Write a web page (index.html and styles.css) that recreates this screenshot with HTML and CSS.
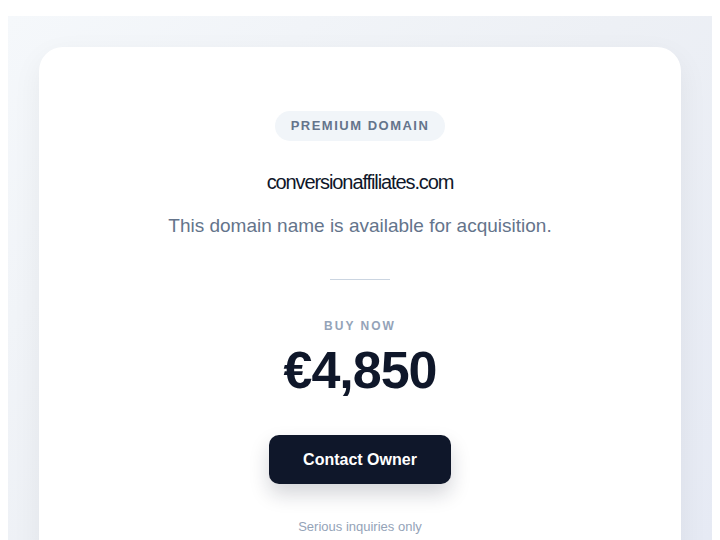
FILE: index.html
```html
<!DOCTYPE html>
<html>
<head>
    <title>conversionaffiliates.com</title>
    <link rel="stylesheet" href="styles.css">
</head>
<body>
    <div class="page">
        <div class="card">
            <span class="badge">Premium Domain</span>
            <h1 class="domain">conversionaffiliates.com</h1>
            <p class="lead">This domain name is available for acquisition.</p>
            <div class="divider"></div>
            <p class="label">Buy Now</p>
            <p class="price">€4,850</p>
            <button class="my-button">Contact Owner</button>
            <p class="note">Serious inquiries only</p>
        </div>
    </div>
</body>
</html>
```

FILE: styles.css
```css
body {
    margin: 8px 8px 0;
    background-color: #ffffff;
    font-family: "Liberation Sans", Arial, sans-serif;
}

.page {
    margin-top: 8px;
    padding: 31px 31px 0;
    background: linear-gradient(135deg, #f5f8fb 0%, #edf0f5 50%, #e6eaf4 100%);
    height: 524px;
    box-sizing: border-box;
    overflow: hidden;
}

.card {
    background-color: #ffffff;
    border-radius: 24px;
    box-shadow: 0 10px 30px rgba(15, 23, 42, 0.06);
    padding: 64px 40px 40px;
    text-align: center;
}

.badge {
    display: inline-block;
    background-color: #f1f5f9;
    color: #64748b;
    font-size: 13px;
    font-weight: bold;
    letter-spacing: 1.5px;
    text-transform: uppercase;
    padding: 0 16px;
    line-height: 30px;
    border-radius: 15px;
}

.domain {
    margin: 26px 0 0;
    font-size: 20px;
    font-weight: normal;
    letter-spacing: -1.1px;
    color: #0f172a;
    line-height: 30px;
}

.lead {
    margin: 15px 0 0;
    font-size: 19px;
    color: #64748b;
    line-height: 28px;
}

.divider {
    width: 60px;
    height: 1px;
    background-color: #cbd5e1;
    margin: 39px auto 0;
}

.label {
    margin: 38px 0 0;
    font-size: 12px;
    font-weight: bold;
    letter-spacing: 2px;
    text-transform: uppercase;
    color: #94a3b8;
    line-height: 16px;
}

.price {
    margin: 6px 0 0;
    font-size: 52px;
    font-weight: bold;
    letter-spacing: -1px;
    color: #0f172a;
    line-height: 60px;
}

.my-button {
    margin-top: 35px;
    background-color: #0f172a;
    color: #ffffff;
    border: none;
    border-radius: 10px;
    width: 182px;
    height: 49px;
    font-family: "Liberation Sans", Arial, sans-serif;
    font-size: 16px;
    font-weight: bold;
    cursor: pointer;
    box-shadow: 0 10px 20px rgba(15, 23, 42, 0.18);
}

.note {
    margin: 35px 0 0;
    font-size: 13px;
    color: #94a3b8;
}
```
